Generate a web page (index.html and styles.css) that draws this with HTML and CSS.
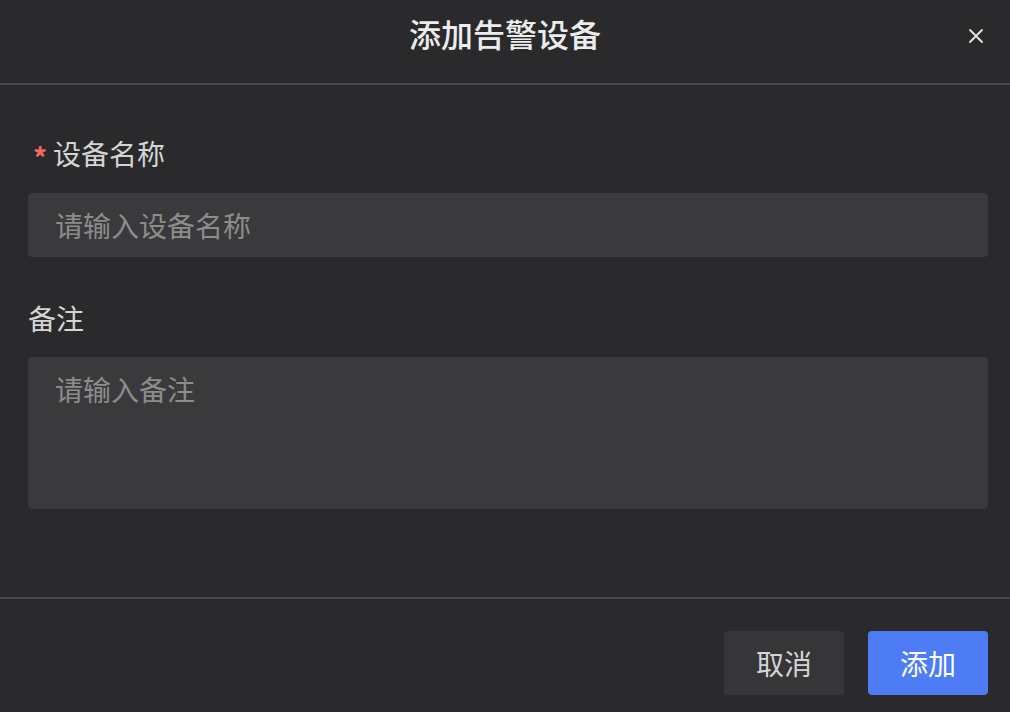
FILE: index.html
```html
<!DOCTYPE html>
<html lang="zh">
<head>
<meta charset="utf-8">
<title>添加告警设备</title>
<link rel="stylesheet" href="styles.css">
</head>
<body>
<div class="dialog">
  <header class="dialog-header">
    <h1 class="dialog-title">添加告警设备</h1>
    <button class="close-btn" aria-label="关闭">
      <svg width="16" height="16" viewBox="0 0 16 16"><path d="M2 2L14 14M14 2L2 14" stroke="#e6e6e6" stroke-width="1.8" stroke-linecap="round" fill="none"/></svg>
    </button>
  </header>
  <main class="dialog-body">
    <div class="field">
      <label class="field-label"><span class="required">*</span>设备名称</label>
      <input class="input" type="text" placeholder="请输入设备名称">
    </div>
    <div class="field">
      <label class="field-label plain">备注</label>
      <textarea class="textarea" placeholder="请输入备注"></textarea>
    </div>
  </main>
  <footer class="dialog-footer">
    <button class="btn btn-cancel">取消</button>
    <button class="btn btn-primary">添加</button>
  </footer>
</div>
</body>
</html>
```
FILE: styles.css
```css
* { box-sizing: border-box; }
html, body {
  margin: 0;
  padding: 0;
  background: #2a2a2c;
  width: 1010px;
  height: 712px;
  overflow: hidden;
  font-family: "Noto Sans CJK SC", "Noto Sans", sans-serif;
}
.dialog {
  width: 1010px;
  height: 712px;
  display: flex;
  flex-direction: column;
}
.dialog-header {
  height: 85px;
  flex: none;
  display: flex;
  align-items: center;
  justify-content: center;
  border-bottom: 2px solid #48484a;
  position: relative;
}
.dialog-title {
  margin: 0;
  font-size: 32px;
  font-weight: 500;
  color: #ececec;
  line-height: 1;
  padding-bottom: 18px;
}
.close-btn {
  position: absolute;
  right: 26px;
  top: 28px;
  width: 16px;
  height: 16px;
  padding: 0;
  border: none;
  background: none;
  display: flex;
}
.dialog-body {
  height: 514px;
  flex: none;
  padding: 0 22px 0 28px;
  border-bottom: 2px solid #48484a;
}
.field { display: flex; flex-direction: column; }
.field-label {
  font-size: 28px;
  color: #d4d4d4;
  line-height: 28px;
  height: 28px;
  margin-top: 54px;
  margin-bottom: 26px;
  display: flex;
  align-items: flex-start;
}
.field-label.plain { margin-top: 47px; margin-bottom: 25px; }
.required {
  color: #ef6a68;
  font-size: 28px;
  font-weight: 700;
  width: 25px;
  height: 28px;
  line-height: 36px;
  padding-left: 5px;
}
.input, .textarea {
  width: 960px;
  background: #3a3a3c;
  border: none;
  border-radius: 4px;
  color: #d4d4d4;
  font-family: inherit;
  font-size: 28px;
  outline: none;
  padding: 0 27px;
}
.input { height: 64px; }
.textarea {
  height: 152px;
  resize: none;
  padding-top: 14px;
  line-height: 36px;
}
.input::placeholder, .textarea::placeholder { color: #8c8c8c; }
.dialog-footer {
  flex: 1;
  display: flex;
  justify-content: flex-end;
  align-items: flex-start;
  gap: 24px;
  padding: 32px 22px 0 0;
}
.btn {
  width: 120px;
  height: 64px;
  border: none;
  border-radius: 4px;
  font-family: inherit;
  font-size: 28px;
  line-height: 1;
  padding: 0;
}
.btn-cancel { background: #363638; color: #d4d4d4; }
.btn-primary { background: #4d7cf4; color: #ffffff; }
```
